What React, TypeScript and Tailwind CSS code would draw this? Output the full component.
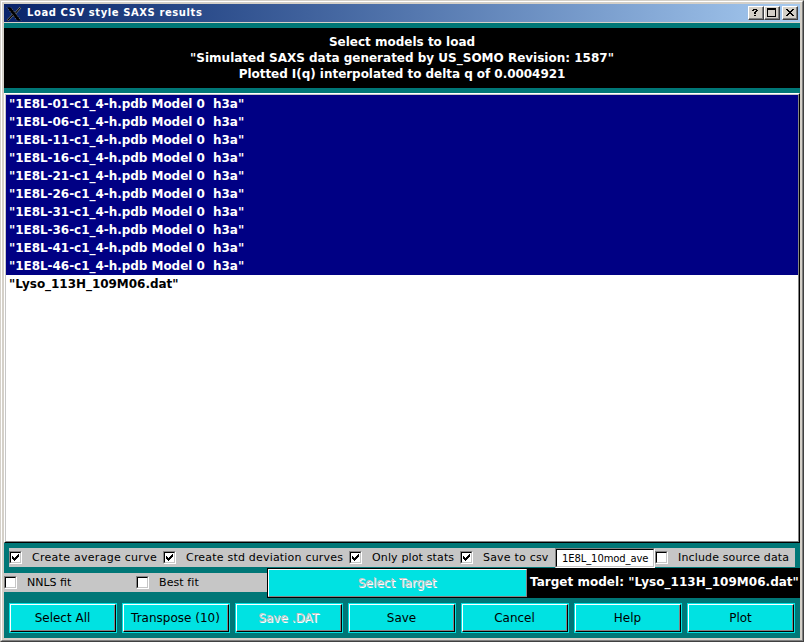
import React from "react";

const models = ["01", "06", "11", "16", "21", "26", "31", "36", "41", "46"];

function Check({ checked = false }: { checked?: boolean }) {
  return (
    <span className="block h-[13px] w-[13px] shrink-0 border border-t-[#848484] border-l-[#848484] border-r-white border-b-white">
      <span className="block h-[11px] w-[11px] border border-t-black border-l-black border-r-[#c6c6c6] border-b-[#c6c6c6] bg-white">
        {checked && (
          <svg width="9" height="9" viewBox="0 0 9 9" shapeRendering="crispEdges">
            <path d="M1 3h1v3h-1zM2 4h1v3h-1zM3 5h1v3h-1zM4 4h1v3h-1zM5 3h1v3h-1zM6 2h1v3h-1zM7 1h1v3h-1z" fill="#000" />
          </svg>
        )}
      </span>
    </span>
  );
}

function Option({ label, checked, className, text }: { label: string; checked?: boolean; className: string; text: string }) {
  return (
    <label className={`flex h-[19px] shrink-0 items-center bg-[#c6c6c6] whitespace-pre ${className}`}>
      <Check checked={checked} />
      <span className={`ml-[10px] text-[11px] leading-[19px] ${text}`}>{label}</span>
    </label>
  );
}

function PushButton({ label, disabled }: { label: string; disabled?: boolean }) {
  return (
    <button className="h-[30px] w-[108px] border border-[#00e2e2]">
      <span className="block h-[28px] border border-t-white border-l-white border-r-black border-b-black bg-[#00e2e2]">
        <span className={`block h-[26px] border-r border-b border-[#848484] text-[12px] leading-[27px] ${disabled ? "text-[#c6c6c6] [text-shadow:1px_1px_0_#fff]" : "text-black"}`}>
          {label}
        </span>
      </span>
    </button>
  );
}

function TitleButton({ children }: { children: React.ReactNode }) {
  return (
    <span className="block h-[14px] w-4 border border-t-white border-l-white border-r-[#404040] border-b-[#404040]">
      <span className="block h-3 border-r border-b border-[#808080] bg-[#d4d0c8]">
        <svg width="13" height="11" viewBox="0 0 13 11" shapeRendering="crispEdges" className="block">
          {children}
        </svg>
      </span>
    </span>
  );
}

export default function App() {
  return (
    <div className="h-[642px] w-[804px] border border-t-[#d4d0c8] border-l-[#d4d0c8] border-r-[#404040] border-b-[#404040] font-['DejaVu_Sans',sans-serif]">
      <div className="h-[640px] border border-t-white border-l-white border-r-[#808080] border-b-[#808080]">
        <div className="flex h-[638px] flex-col border-2 border-[#d4d0c8] bg-[#007777]">
          <header className="flex h-[18px] shrink-0 items-center bg-linear-to-r from-[#0a246a] to-[#a6caf0]">
            <svg width="16" height="16" viewBox="0 0 16 16" className="ml-[2px] mt-[2px] block">
              <path d="M1 1.5h4L15 14.5h-4z" fill="#000" />
              <path d="M5 1.5L15 14.5M1 1.5L11 14.5" stroke="#8a8a80" strokeWidth=".7" strokeDasharray="1.2 1" />
              <path d="M14.5 1.5L9.5 7.2M6.8 9L1.5 14.5" stroke="#999990" strokeWidth="2" />
              <path d="M14.5 1.5L9.5 7.2M6.8 9L1.5 14.5" stroke="#000" strokeWidth="1.1" />
            </svg>
            <h1 className="ml-[5px] text-[10px] leading-[18px] font-bold tracking-[0.58px] text-white">Load CSV style SAXS results</h1>
            <div className="mr-[2px] ml-auto flex">
              <TitleButton>
                <path d="M4 2h4v1h-4zM3 3h2v1h-2zM7 3h2v1h-2zM6 4h2v1h-2zM5 5h2v2h-2zM5 8h2v1h-2z" />
              </TitleButton>
              <TitleButton>
                <path d="M2 1h9v9h-9zM3 3v6h7v-6z" fillRule="evenodd" />
              </TitleButton>
              <span className="ml-[2px]">
                <TitleButton>
                  <path d="M3 2h2v1h-2zM9 2h2v1h-2zM4 3h2v1h-2zM8 3h2v1h-2zM5 4h4v1h-4zM6 5h2v1h-2zM5 6h4v1h-4zM4 7h2v1h-2zM8 7h2v1h-2zM3 8h2v1h-2zM9 8h2v1h-2z" />
                </TitleButton>
              </span>
            </div>
          </header>
          <div className="h-px shrink-0 bg-[#d4d0c8]" />
          <section className="mt-[5px] h-[60px] shrink-0 bg-black pt-[6px] text-center text-[12px] leading-4 font-bold text-white">
            <p>Select models to load</p>
            <p>"Simulated SAXS data generated by US_SOMO Revision: 1587"</p>
            <p className="tracking-[-0.04px]">Plotted I(q) interpolated to delta q of 0.0004921</p>
          </section>
          <div className="mt-[5px] h-[450px] shrink-0 border border-t-white border-l-white border-r-black border-b-black">
            <ul className="h-[448px] border border-t-[#c6c6c6] border-l-[#c6c6c6] border-r-[#848484] border-b-[#848484] bg-white text-[12px] leading-[18px] font-bold tracking-[-0.04px] whitespace-pre">
              {models.map((m) => (
                <li key={m} className="h-[18px] bg-[#000084] pl-[3px] text-white">{`"1E8L-${m}-c1_4-h.pdb Model 0  h3a"`}</li>
              ))}
              <li className="h-[18px] pl-[3px] text-black">"Lyso_113H_109M06.dat"</li>
            </ul>
          </div>
          <div className="mx-[5px] mt-[5px] flex h-[20px] shrink-0">
            <Option label="Create average curve" checked className="w-[154px]" text="tracking-[0.28px]" />
            <Option label="Create std deviation curves" checked className="w-[186px]" text="tracking-[0.2px]" />
            <Option label="Only plot stats" checked className="w-[111px]" text="tracking-[0.14px]" />
            <Option label="Save to csv" checked className="w-[95px]" text="tracking-[0.2px]" />
            <div className="h-[20px] w-[100px] shrink-0 border border-t-[#848484] border-l-[#848484] border-r-white border-b-white">
              <div className="h-[18px] border border-t-black border-l-black border-r-[#c6c6c6] border-b-[#c6c6c6] bg-white pl-[5px] text-[10px] leading-[17px] tracking-[-0.1px] whitespace-nowrap">1E8L_10mod_ave</div>
            </div>
            <Option label="Include source data" className="w-[140px]" text="tracking-[0.15px]" />
          </div>
          <div className="flex h-[30px] shrink-0">
            <div className="flex w-[263px] shrink-0 pt-[5px]">
              <Option label="NNLS fit" className="w-[132px]" text="" />
              <Option label="Best fit" className="w-[131px]" text="tracking-[0.1px]" />
            </div>
            <div className="flex grow bg-black">
              <button className="mt-px ml-px h-[28px] w-[259px] border border-t-white border-l-white border-r-[#848484] border-b-[#848484] bg-[#00e2e2] pr-px text-[12px] leading-[27px] tracking-[0.05px] text-[#c6c6c6] [text-shadow:1px_1px_0_#fff]">
                Select Target
              </button>
              <span className="ml-[3px] text-[12px] leading-[29px] font-bold tracking-[0.02px] whitespace-nowrap text-white">Target model: "Lyso_113H_109M06.dat"</span>
            </div>
          </div>
          <footer className="mx-[5px] mt-[5px] flex shrink-0 gap-[5px]">
            <PushButton label="Select All" />
            <PushButton label="Transpose (10)" />
            <PushButton label="Save .DAT" disabled />
            <PushButton label="Save" />
            <PushButton label="Cancel" />
            <PushButton label="Help" />
            <PushButton label="Plot" />
          </footer>
        </div>
      </div>
    </div>
  );
}
